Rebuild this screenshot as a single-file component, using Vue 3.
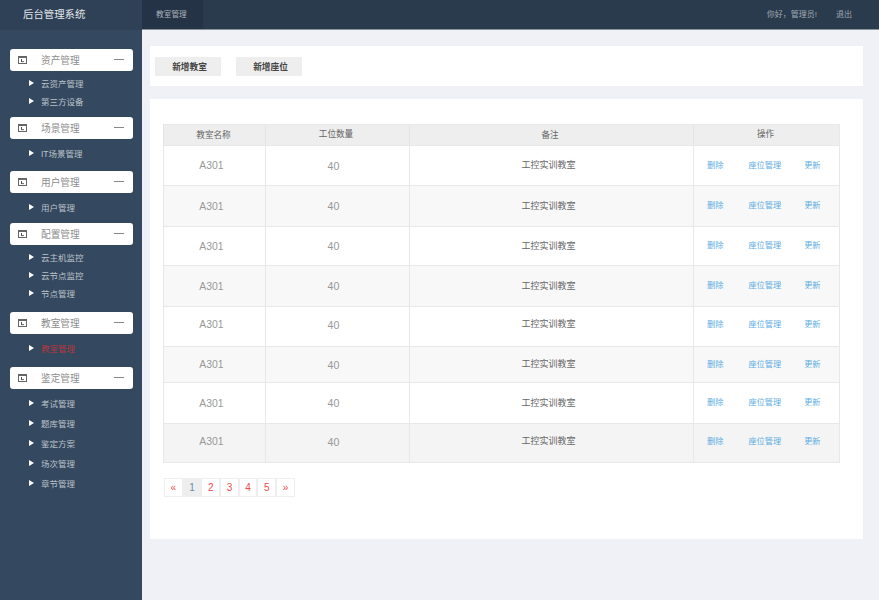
<script setup>
const groups = [
  { name: '资产管理', items: ['云资产管理', '第三方设备'] },
  { name: '场景管理', items: ['IT场景管理'] },
  { name: '用户管理', items: ['用户管理'] },
  { name: '配置管理', items: ['云主机监控', '云节点监控', '节点管理'] },
  { name: '教室管理', items: ['教室管理'], active: true },
  { name: '鉴定管理', items: ['考试管理', '题库管理', '鉴定方案', '场次管理', '章节管理'] },
]
const rows = [
  { h: 40, lift: 0 },
  { h: 41, lift: 0 },
  { h: 39, lift: 0 },
  { h: 41, lift: 0 },
  { h: 40, lift: 4 },
  { h: 36, lift: 0 },
  { h: 41, lift: 0 },
  { h: 39, lift: 3 },
]
const pages = ['«', '1', '2', '3', '4', '5', '»']
</script>

<template>
  <div class="page">
    <aside class="sidebar">
      <div class="logo">后台管理系统</div>
      <nav class="nav">
        <section v-for="g in groups" :key="g.name" class="group">
          <div class="group-head">
            <svg class="cal" width="9" height="8" viewBox="0 0 9 8">
              <rect x="0.5" y="0.5" width="8" height="7" fill="#fff" stroke="#666" />
              <rect x="0" y="0" width="9" height="2" fill="#666" />
              <rect x="3" y="3" width="1" height="3" fill="#555" />
              <rect x="3" y="5.2" width="3" height="0.9" fill="#555" />
            </svg>
            <span class="group-name">{{ g.name }}</span>
            <span class="dash"></span>
          </div>
          <ul class="items">
            <li v-for="it in g.items" :key="it" class="item" :class="{ active: g.active }">
              <i class="tri"></i>{{ it }}
            </li>
          </ul>
        </section>
      </nav>
    </aside>
    <div class="right">
      <header class="top">
        <div class="tab">教室管理</div>
        <div class="user">
          <span>你好，管理员!</span>
          <span>退出</span>
        </div>
      </header>
      <main class="main">
        <div class="panel tools">
          <button class="btn">新增教室</button>
          <button class="btn">新增座位</button>
        </div>
        <div class="panel content">
          <table class="table">
            <colgroup>
              <col class="c1" /><col class="c2" /><col class="c3" /><col class="c4" />
            </colgroup>
            <thead>
              <tr>
                <th class="h1">教室名称</th>
                <th class="h2">工位数量</th>
                <th class="h3">备注</th>
                <th class="h4">操作</th>
              </tr>
            </thead>
            <tbody>
              <tr v-for="(r, i) in rows" :key="i" :style="{ height: r.h + 'px' }">
                <td class="name" :style="{ paddingBottom: r.lift + 'px' }">A301</td>
                <td class="count" :style="{ paddingBottom: r.lift + 'px' }">40</td>
                <td class="note" :style="{ paddingBottom: r.lift + 'px' }">
                  <div class="note-text">工控实训教室</div>
                </td>
                <td :style="{ paddingBottom: r.lift + 'px' }">
                  <div class="ops"><a>删除</a><a>座位管理</a><a>更新</a></div>
                </td>
              </tr>
            </tbody>
          </table>
          <ul class="pager">
            <li v-for="p in pages" :key="p" :class="{ on: p === '1' }">{{ p }}</li>
          </ul>
        </div>
      </main>
    </div>
  </div>
</template>

<style>
html, body { margin: 0; padding: 0; background: #f0f1f6; }
</style>

<style scoped>
.page {
  display: flex;
  width: 879px;
  height: 600px;
  overflow: hidden;
  font-family: "Liberation Sans", "Noto Sans CJK SC", sans-serif;
}
.sidebar {
  width: 142px;
  flex: none;
  background: #34485f;
}
.logo {
  height: 30px;
  line-height: 30px;
  padding-left: 23px;
  font-size: 10.4px;
  color: #e4e7ea;
  background: #2f4157;
}
.nav { padding: 19px 9px 0 10px; }
.group:nth-child(1) { margin-bottom: 7px; }
.group:nth-child(2) { margin-bottom: 9px; }
.group:nth-child(3) { margin-bottom: 7px; }
.group:nth-child(4), .group:nth-child(5) { margin-bottom: 10px; }
.group-head {
  display: flex;
  align-items: center;
  height: 22px;
  background: #fff;
  border-radius: 3px;
  padding: 0 9px 0 8px;
}
.cal { flex: none; }
.group-name {
  margin-left: 14px;
  flex: 1;
  font-size: 9.7px;
  color: #8d8d8d;
}
.dash {
  width: 10px;
  height: 1px;
  background: #888;
  margin-bottom: 2px;
}
.items {
  list-style: none;
  margin: 0;
  padding: 5px 0 0;
}
.group:nth-child(1) .items, .group:nth-child(4) .items { padding-top: 3px; }
.group:nth-child(6) .items { padding-top: 4px; }
.item {
  display: flex;
  align-items: center;
  height: 18px;
  padding-left: 19px;
  font-size: 8.5px;
  color: #bcc2c9;
}
.group:nth-child(6) .item { height: 20px; }
.item.active { color: #b5383c; }
.tri {
  width: 0;
  height: 0;
  margin-right: 7px;
  border-left: 5px solid #fff;
  border-top: 3px solid transparent;
  border-bottom: 3px solid transparent;
}
.right {
  flex: 1;
  min-width: 0;
  display: flex;
  flex-direction: column;
}
.top {
  height: 29px;
  flex: none;
  display: flex;
  justify-content: space-between;
  background: #2a3b4e;
  border-bottom: 1px solid #8a949c;
}
.tab {
  width: 61px;
  box-sizing: border-box;
  padding-left: 14px;
  line-height: 29px;
  font-size: 7.7px;
  color: #a9b1ba;
  background: #243345;
}
.user {
  display: flex;
  gap: 19px;
  padding-right: 27px;
  line-height: 29px;
  font-size: 8px;
  color: #a0a8b1;
}
.main {
  flex: 1;
  background: #f0f1f6;
  padding: 16px 16px 0 8px;
}
.panel { background: #fff; }
.tools {
  height: 40px;
  display: flex;
  align-items: center;
  gap: 15px;
  padding-left: 5px;
  margin-bottom: 13px;
}
.btn {
  width: 66px;
  height: 19px;
  border: 0;
  padding: 0 0 0 3px;
  background: #eee;
  color: #444;
  font: 600 8.7px "Liberation Sans", "Noto Sans CJK SC", sans-serif;
}
.content {
  height: 440px;
  box-sizing: border-box;
  padding: 25px 0 0 13px;
}
.table {
  width: 676px;
  table-layout: fixed;
  border-collapse: collapse;
  border: 1px solid #e8e8e8;
  font-size: 9px;
}
.c1 { width: 102px; }
.c2 { width: 144px; }
.c3 { width: 284px; }
.c4 { width: 146px; }
th {
  box-sizing: border-box;
  height: 21px;
  padding: 0;
  background: #eee;
  color: #666;
  font-weight: 400;
  font-size: 8.6px;
  line-height: 12px;
  border-left: 1px solid #e4e4e4;
}
.h1 { padding-right: 2px; }
.h2 { padding: 0 3px 2px 0; }
.h3 { padding-right: 3px; }
.h4 { padding: 0 2px 2px 0; }
td {
  padding: 0;
  text-align: center;
  border: 1px solid #e8e8e8;
  color: #666;
}
tbody tr:nth-child(even) { background: #f8f8f8; }
tbody tr:last-child { background: #f4f4f4; }
.name { padding-right: 6px; font-size: 10.4px; color: #999; }
.count { padding-right: 8px; font-size: 10.6px; color: #999; }
.note { padding-right: 6px; }
.note-text { padding-bottom: 2px; }
.ops {
  display: flex;
  gap: 25px;
  padding: 0 0 4px 13px;
  font-size: 8.2px;
  color: #5dade2;
}
.ops a:last-child { margin-left: -2px; }
.pager {
  list-style: none;
  display: flex;
  margin: 15px 0 0 1px;
  padding: 0;
}
.pager li {
  width: 18.7px;
  height: 19px;
  box-sizing: border-box;
  border: 1px solid #eee;
  text-align: center;
  line-height: 18px;
  font-size: 10px;
  color: #ee4b4b;
}
.pager li.on {
  background: #eee;
  color: #6a8bb0;
}
</style>
